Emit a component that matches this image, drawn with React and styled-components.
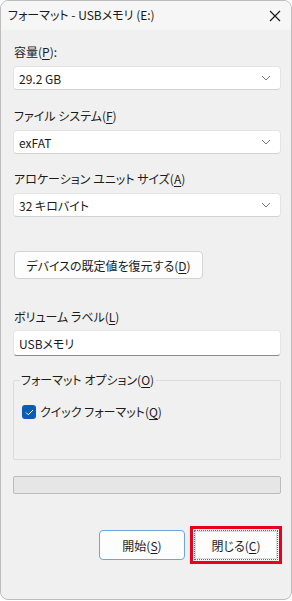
import React from "react";
import styled, { createGlobalStyle } from "styled-components";

const Global = createGlobalStyle`
  html, body { margin: 0; padding: 0; background: #ffffff; }
  body {
    font-family: "Noto Sans CJK JP", "Noto Sans", sans-serif;
    font-size: 12px;
    color: #1b1b1b;
    font-feature-settings: "palt" 1;
  }
`;

const Window = styled.div`
  width: 290px;
  height: 598px;
  border: 1px solid #bdbdbd;
  border-radius: 8px;
  background: #f0f0f0;
  overflow: hidden;
  display: flex;
  flex-direction: column;
`;

const TitleBar = styled.div`
  height: 29px;
  flex: none;
  background: #f6f6f6;
  display: flex;
  align-items: center;
  justify-content: space-between;
  padding: 0 10px 0 7px;
`;

const Title = styled.span`
  font-size: 12px;
  line-height: 16px;
  color: #1a1a1a;
  margin-top: -2px;
`;

const Body = styled.div`
  flex: 1;
  display: flex;
  flex-direction: column;
  padding: 14px 10px 0 12px;
`;

const Label = styled.div`
  font-size: 12px;
  line-height: 16px;
  margin: ${(p) => p.$mt || 0}px 0 ${(p) => p.$mb ?? 6}px 1px;
  white-space: nowrap;
`;

const U = styled.span`
  text-decoration: underline;
  text-underline-offset: 2px;
`;

const Select = styled.div`
  height: 24px;
  background: #ffffff;
  border: 1px solid #e3e3e3;
  border-bottom-color: #d2d2d2;
  border-radius: 4px;
  display: flex;
  align-items: center;
  justify-content: space-between;
  padding: 0 9px 0 5px;
  font-size: 12px;
  box-sizing: border-box;
`;

const TextBox = styled.div`
  height: 26px;
  background: #ffffff;
  border: 1px solid #e5e5e5;
  border-bottom: 1px solid #8a8a8a;
  border-radius: 4px;
  display: flex;
  align-items: center;
  padding: 0 5px;
  box-sizing: border-box;
`;

const Button = styled.div`
  height: ${(p) => p.$h || 28}px;
  width: ${(p) => p.$w}px;
  box-sizing: border-box;
  background: #fdfdfd;
  border: 1px solid ${(p) => (p.$primary ? "#69a7dd" : "#d3d3d3")};
  border-radius: 4px;
  display: flex;
  align-items: center;
  justify-content: center;
  font-size: 12px;
  white-space: nowrap;
`;

const RestoreWrap = styled.div`
  margin: 34px 0 0 1px;
`;

const Group = styled.fieldset`
  margin: 16px 0 0 0;
  padding: 8px 8px 0 8px;
  height: 88px;
  box-sizing: border-box;
  border: 1px solid #dcdcdc;
  border-radius: 2px;
`;

const Legend = styled.legend`
  padding: 0 2px 0 1px;
  margin-left: -2px;
  font-size: 12px;
  line-height: 16px;
`;

const CheckRow = styled.label`
  display: flex;
  align-items: center;
  gap: 4px;
  margin-top: 8px;
  font-size: 12px;
  line-height: 16px;
`;

const Box = styled.span`
  width: 14px;
  height: 14px;
  border-radius: 3px;
  background: #0b5cb8;
  display: flex;
  align-items: center;
  justify-content: center;
`;

const Progress = styled.div`
  margin-top: 16px;
  height: 18px;
  background: #e6e6e6;
  border: 1px solid #bcbcbc;
  border-radius: 2px;
  box-sizing: border-box;
`;

const Footer = styled.div`
  margin-top: 32px;
  display: flex;
  justify-content: flex-end;
  align-items: center;
  gap: 5px;
`;

const Highlight = styled.div`
  border: 3px solid #e8001c;
  padding: 1px;
  margin-right: -1px;
`;

const FocusButton = styled(Button)`
  border: 1px dotted #6d6d6d;
  border-radius: 0;
  outline: 1px solid #dcdcdc;
  outline-offset: -2px;
`;

const Chevron = () => (
  <svg width="10" height="6" viewBox="0 0 10 6">
    <path d="M1 1 L5 5 L9 1" fill="none" stroke="#777" strokeWidth="1" />
  </svg>
);

const Close = () => (
  <svg width="12" height="12" viewBox="0 0 12 12">
    <path d="M1 1 L11 11 M11 1 L1 11" stroke="#1a1a1a" strokeWidth="1.2" />
  </svg>
);

function Dropdown({ value }) {
  return (
    <Select>
      <span>{value}</span>
      <Chevron />
    </Select>
  );
}

export default function App() {
  return (
    <>
      <Global />
      <Window>
        <TitleBar>
          <Title>フォーマット - USBメモリ (E:)</Title>
          <Close />
        </TitleBar>
        <Body>
          <Label>容量(<U>P</U>):</Label>
          <Dropdown value="29.2 GB" />

          <Label $mt={18}>ファイル システム(<U>F</U>)</Label>
          <Dropdown value="exFAT" />

          <Label $mt={17}>アロケーション ユニット サイズ(<U>A</U>)</Label>
          <Dropdown value="32 キロバイト" />

          <RestoreWrap>
            <Button $w={189}>デバイスの既定値を復元する(<U>D</U>)</Button>
          </RestoreWrap>

          <Label $mt={30} $mb={5}>ボリューム ラベル(<U>L</U>)</Label>
          <TextBox>USBメモリ</TextBox>

          <Group>
            <Legend>フォーマット オプション(<U>O</U>)</Legend>
            <CheckRow>
              <Box>
                <svg width="9" height="7" viewBox="0 0 9 7">
                  <path d="M1 3.5 L3.3 5.8 L8 1" fill="none" stroke="#fff" strokeWidth="1" />
                </svg>
              </Box>
              <span>クイック フォーマット(<U>Q</U>)</span>
            </CheckRow>
          </Group>

          <Progress />

          <Footer>
            <Button $primary $w={86} $h={30}>開始(<U>S</U>)</Button>
            <Highlight>
              <FocusButton $w={84} $h={30}>閉じる(<U>C</U>)</FocusButton>
            </Highlight>
          </Footer>
        </Body>
      </Window>
    </>
  );
}
